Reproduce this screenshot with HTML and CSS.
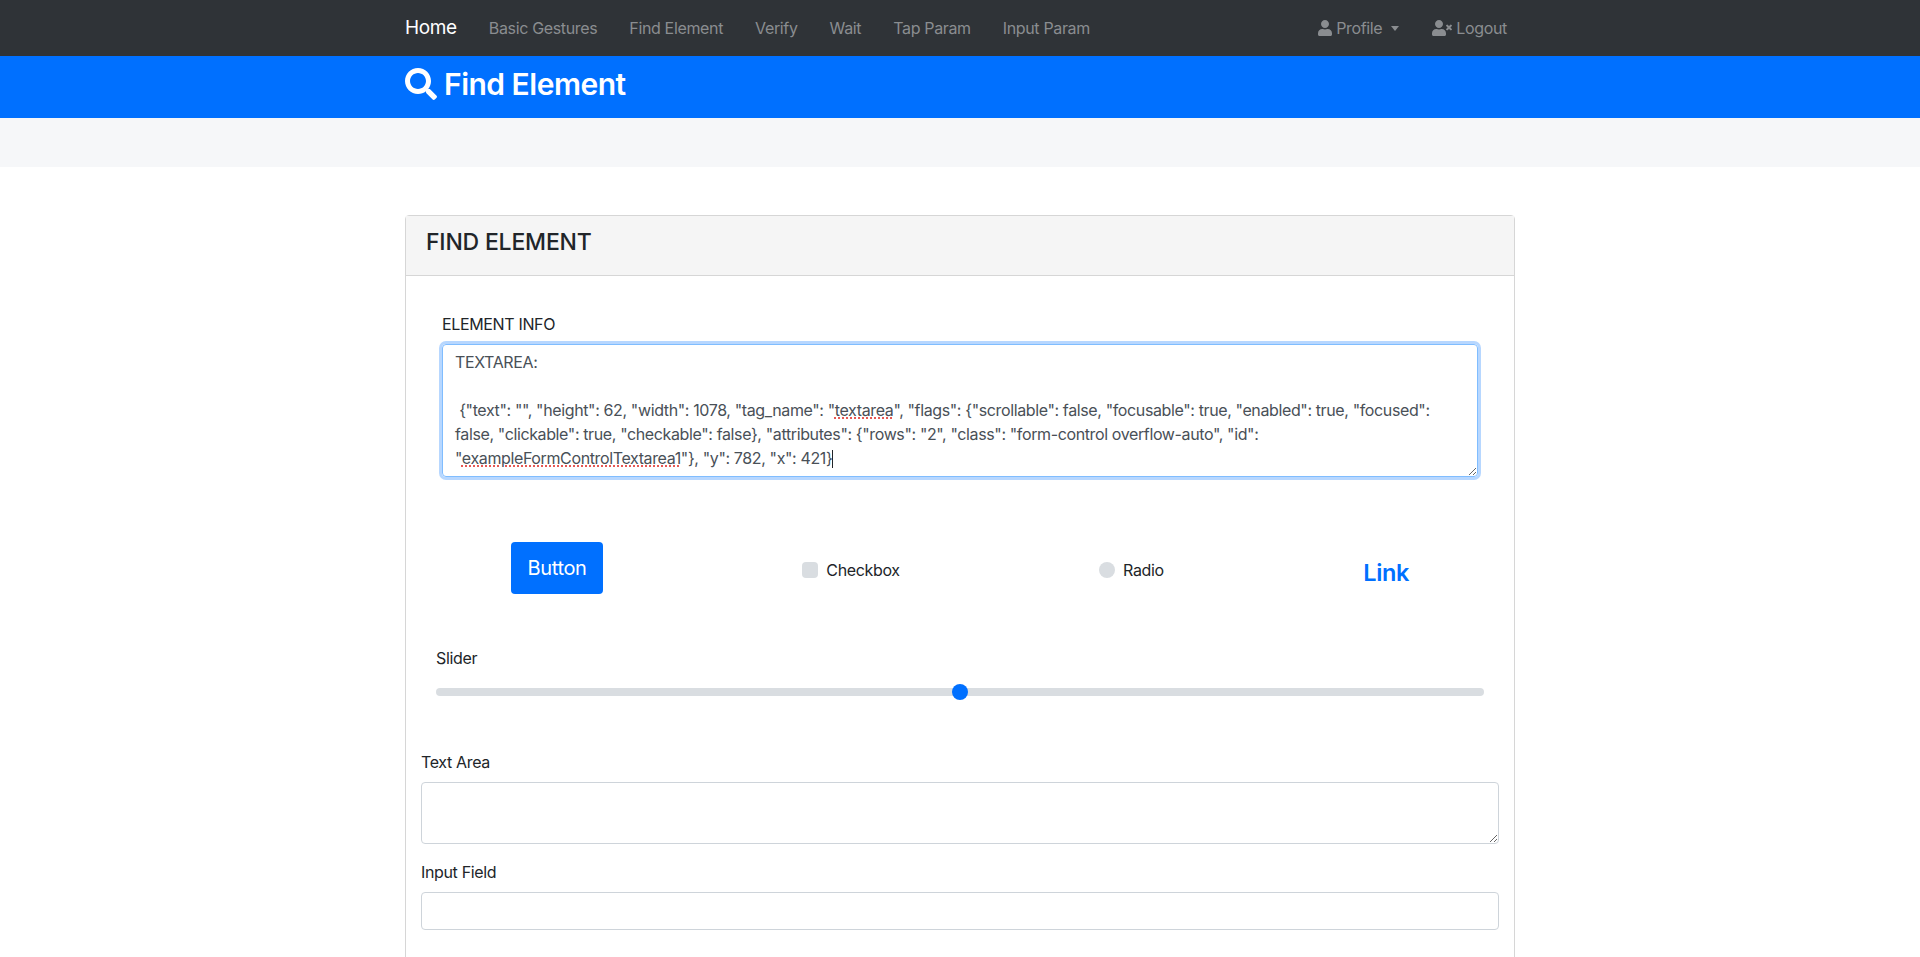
FILE: index.html
```html
<!DOCTYPE html>
<html lang="en">
<head>
    <meta charset="UTF-8">
    <meta name="viewport" content="width=device-width, initial-scale=1.0">
    <title>Find Element</title>
    <link rel="stylesheet" href="styles.css">
</head>
<body>

    <nav class="navbar">
        <div class="container navbar-inner">
            <a class="nav-home" href="#">Home</a>
            <div class="nav-links">
                <a class="nav-link" href="#">Basic Gestures</a>
                <a class="nav-link" href="#">Find Element</a>
                <a class="nav-link" href="#">Verify</a>
                <a class="nav-link" href="#">Wait</a>
                <a class="nav-link" href="#">Tap Param</a>
                <a class="nav-link" href="#">Input Param</a>
            </div>
            <div class="nav-right">
                <a class="nav-link nav-profile" href="#">
                    <svg class="icon-user" viewBox="0 0 448 512"><path d="M224 256c70.7 0 128-57.3 128-128S294.7 0 224 0 96 57.3 96 128s57.3 128 128 128zm89.6 32h-16.7c-22.2 10.2-46.9 16-72.9 16s-50.6-5.8-72.9-16h-16.7C60.2 288 0 348.2 0 422.4V464c0 26.5 21.5 48 48 48h352c26.5 0 48-21.5 48-48v-41.6c0-74.2-60.2-134.4-134.4-134.4z"/></svg>
                    Profile
                    <span class="caret"></span>
                </a>
                <a class="nav-link nav-logout" href="#">
                    <svg class="icon-user-times" viewBox="0 0 640 512"><path d="M589.6 240l45.6-45.6c6.3-6.3 6.3-16.5 0-22.8l-22.8-22.8c-6.3-6.3-16.5-6.3-22.8 0L544 194.4l-45.6-45.6c-6.3-6.3-16.5-6.3-22.8 0l-22.8 22.8c-6.3 6.3-6.3 16.5 0 22.8l45.6 45.6-45.6 45.6c-6.3 6.3-6.3 16.5 0 22.8l22.8 22.8c6.3 6.3 16.5 6.3 22.8 0l45.6-45.6 45.6 45.6c6.3 6.3 16.5 6.3 22.8 0l22.8-22.8c6.3-6.3 6.3-16.5 0-22.8L589.6 240zM224 256c70.7 0 128-57.3 128-128S294.7 0 224 0 96 57.3 96 128s57.3 128 128 128zm89.6 32h-16.7c-22.2 10.2-46.9 16-72.9 16s-50.6-5.8-72.9-16h-16.7C60.2 288 0 348.2 0 422.4V464c0 26.5 21.5 48 48 48h352c26.5 0 48-21.5 48-48v-41.6c0-74.2-60.2-134.4-134.4-134.4z"/></svg>
                    Logout
                </a>
            </div>
        </div>
    </nav>

    <header class="page-title">
        <div class="container page-title-inner">
            <svg class="icon-search" viewBox="0 0 512 512"><path d="M505 442.7L405.3 343c-4.5-4.5-10.6-7-17-7H372c27.6-35.3 44-79.7 44-128C416 93.1 322.9 0 208 0S0 93.1 0 208s93.1 208 208 208c48.3 0 92.7-16.4 128-44v16.3c0 6.4 2.5 12.5 7 17l99.7 99.7c9.4 9.4 24.6 9.4 33.9 0l28.3-28.3c9.4-9.4 9.4-24.6.1-34zM208 336c-70.7 0-128-57.2-128-128 0-70.7 57.2-128 128-128 70.7 0 128 57.2 128 128 0 70.7-57.2 128-128 128z"/></svg>
            <h1>Find Element</h1>
        </div>
    </header>

    <div class="sub-band"></div>

    <main class="container">
        <section class="card">
            <div class="card-header">FIND ELEMENT</div>
            <div class="card-body">

                <div class="info-group">
                    <label class="info-label">ELEMENT INFO</label>
                    <div class="info-box">
                        <div class="info-line info-gap">TEXTAREA:</div>
                        <div class="info-line"> {"text": "", "height": 62, "width": 1078, "tag_name": "<span class="misspelt">textarea</span>", "flags": {"scrollable": false, "focusable": true, "enabled": true, "focused":</div>
                        <div class="info-line">false, "clickable": true, "checkable": false}, "attributes": {"rows": "2", "class": "form-control overflow-auto", "id":</div>
                        <div class="info-line">"<span class="misspelt">exampleFormControlTextarea1</span>"}, "y": 782, "x": 421}<span class="text-caret"></span></div>
                    </div>
                </div>

                <div class="controls-row">
                    <button class="btn-primary" type="button">Button</button>
                    <label class="check-item"><input class="check-box" type="checkbox"> Checkbox</label>
                    <label class="check-item"><input class="check-radio" type="radio"> Radio</label>
                    <a class="big-link" href="#">Link</a>
                </div>

                <div class="slider-group">
                    <label class="field-label">Slider</label>
                    <input class="slider" type="range" min="0" max="100" value="50">
                </div>

                <label class="field-label">Text Area</label>
                <textarea class="form-control text-area" rows="2"></textarea>

                <label class="field-label input-label">Input Field</label>
                <input class="form-control input-field" type="text">

            </div>
        </section>
    </main>

</body>
</html>
```

FILE: styles.css
```css
html, body {
    height: 957px;
    overflow: hidden;
}

body {
    margin: 0;
    background-color: #fff;
    color: #212529;
    font-family: Inter, "Liberation Sans", sans-serif;
    font-size: 16px;
    line-height: 24px;
    letter-spacing: -0.35px;
}

a {
    text-decoration: none;
}

.container {
    width: 1110px;
    margin: 0 auto;
}

/* top bar */
.navbar {
    background-color: #2f3337;
    height: 56px;
}

.navbar-inner {
    display: flex;
    align-items: center;
    height: 56px;
}

.nav-home {
    color: #fff;
    font-size: 19px;
    margin-right: 32px;
}

.nav-links {
    display: flex;
    gap: 32px;
}

.nav-link {
    color: #8a8d90;
    display: flex;
    align-items: center;
}

.nav-right {
    display: flex;
    margin-left: auto;
    margin-right: 8px;
    gap: 33px;
}

.icon-user {
    width: 14px;
    height: 16px;
    fill: #8a8d90;
    margin-right: 4px;
}

.icon-user-times {
    width: 20px;
    height: 16px;
    fill: #8a8d90;
    margin-right: 4px;
}

.caret {
    width: 0;
    height: 0;
    margin-left: 9px;
    border-top: 5px solid #8a8d90;
    border-left: 4.5px solid transparent;
    border-right: 4.5px solid transparent;
}

/* blue title */
.page-title {
    background-color: #0070ff;
    height: 62px;
    color: #fff;
}

.page-title-inner {
    display: flex;
    align-items: center;
    height: 56px;
}

.icon-search {
    width: 32px;
    height: 32px;
    fill: #fff;
    margin-right: 7px;
}

.page-title h1 {
    margin: 0;
    font-size: 30px;
    font-weight: 600;
    line-height: 56px;
    letter-spacing: -0.5px;
}

.sub-band {
    background-color: #f6f7f9;
    height: 49px;
}

/* card */
.card {
    margin-top: 48px;
    height: 900px;
    border: 1px solid #d6d6d6;
    border-radius: 4px;
}

.card-header {
    height: 60px;
    box-sizing: border-box;
    padding-left: 20px;
    background-color: #f5f5f5;
    border-bottom: 1px solid #d6d6d6;
    font-size: 23px;
    font-weight: 500;
    line-height: 52px;
    letter-spacing: -0.2px;
}

.card-body {
    padding: 36px 15px 0;
}

.info-group {
    padding: 0 21px;
}

.info-label {
    display: block;
    margin-bottom: 8px;
}

.info-box {
    height: 133px;
    box-sizing: border-box;
    padding: 5px 12px;
    border: 1px solid #80bdff;
    border-radius: 4px;
    box-shadow: 0 0 0 3px #b7d7ff;
    color: #495057;
    letter-spacing: -0.375px;
    overflow: auto;
    resize: vertical;
}

.info-line {
    white-space: pre;
}

.info-gap {
    margin-bottom: 24px;
}

.misspelt {
    text-decoration: underline dotted #e0302a;
    text-underline-offset: 2px;
}

.text-caret {
    display: inline-block;
    width: 1px;
    height: 18px;
    background-color: #212529;
    vertical-align: -4px;
}

.controls-row {
    display: flex;
    justify-content: space-between;
    align-items: flex-start;
    margin-top: 65px;
    padding: 0 90px;
}

.btn-primary {
    width: 92px;
    height: 52px;
    padding: 0;
    border: none;
    border-radius: 4px;
    background-color: #0070ff;
    color: #fff;
    font-family: inherit;
    font-size: 20px;
    letter-spacing: -0.35px;
}

.check-item {
    display: flex;
    align-items: center;
    gap: 8px;
    margin-top: 16px;
}

.check-box,
.check-radio {
    appearance: none;
    width: 16px;
    height: 16px;
    margin: 0;
    background-color: #d9dde1;
}

.check-box {
    border-radius: 4px;
}

.check-radio {
    border-radius: 50%;
}

.big-link {
    margin-top: 19px;
    color: #0070ff;
    font-size: 23.5px;
    font-weight: 600;
}

.slider-group {
    margin-top: 52px;
    padding: 0 15px;
}

.field-label {
    display: block;
    margin-bottom: 8px;
}

.slider {
    appearance: none;
    display: block;
    width: 100%;
    height: 16px;
    margin: 14px 0 0;
    background: transparent;
}

.slider::-webkit-slider-runnable-track {
    height: 8px;
    border-radius: 4px;
    background-color: #d9dde1;
}

.slider::-webkit-slider-thumb {
    appearance: none;
    width: 16px;
    height: 16px;
    margin-top: -4px;
    border-radius: 50%;
    background-color: #0070ff;
}

.form-control {
    display: block;
    width: 100%;
    box-sizing: border-box;
    border: 1px solid #ced4da;
    border-radius: 4px;
    background-color: #fff;
}

.slider-group + .field-label {
    margin-top: 50px;
}

.text-area {
    height: 62px;
}

.input-label {
    margin-top: 16px;
}

.input-field {
    height: 38px;
}
```
